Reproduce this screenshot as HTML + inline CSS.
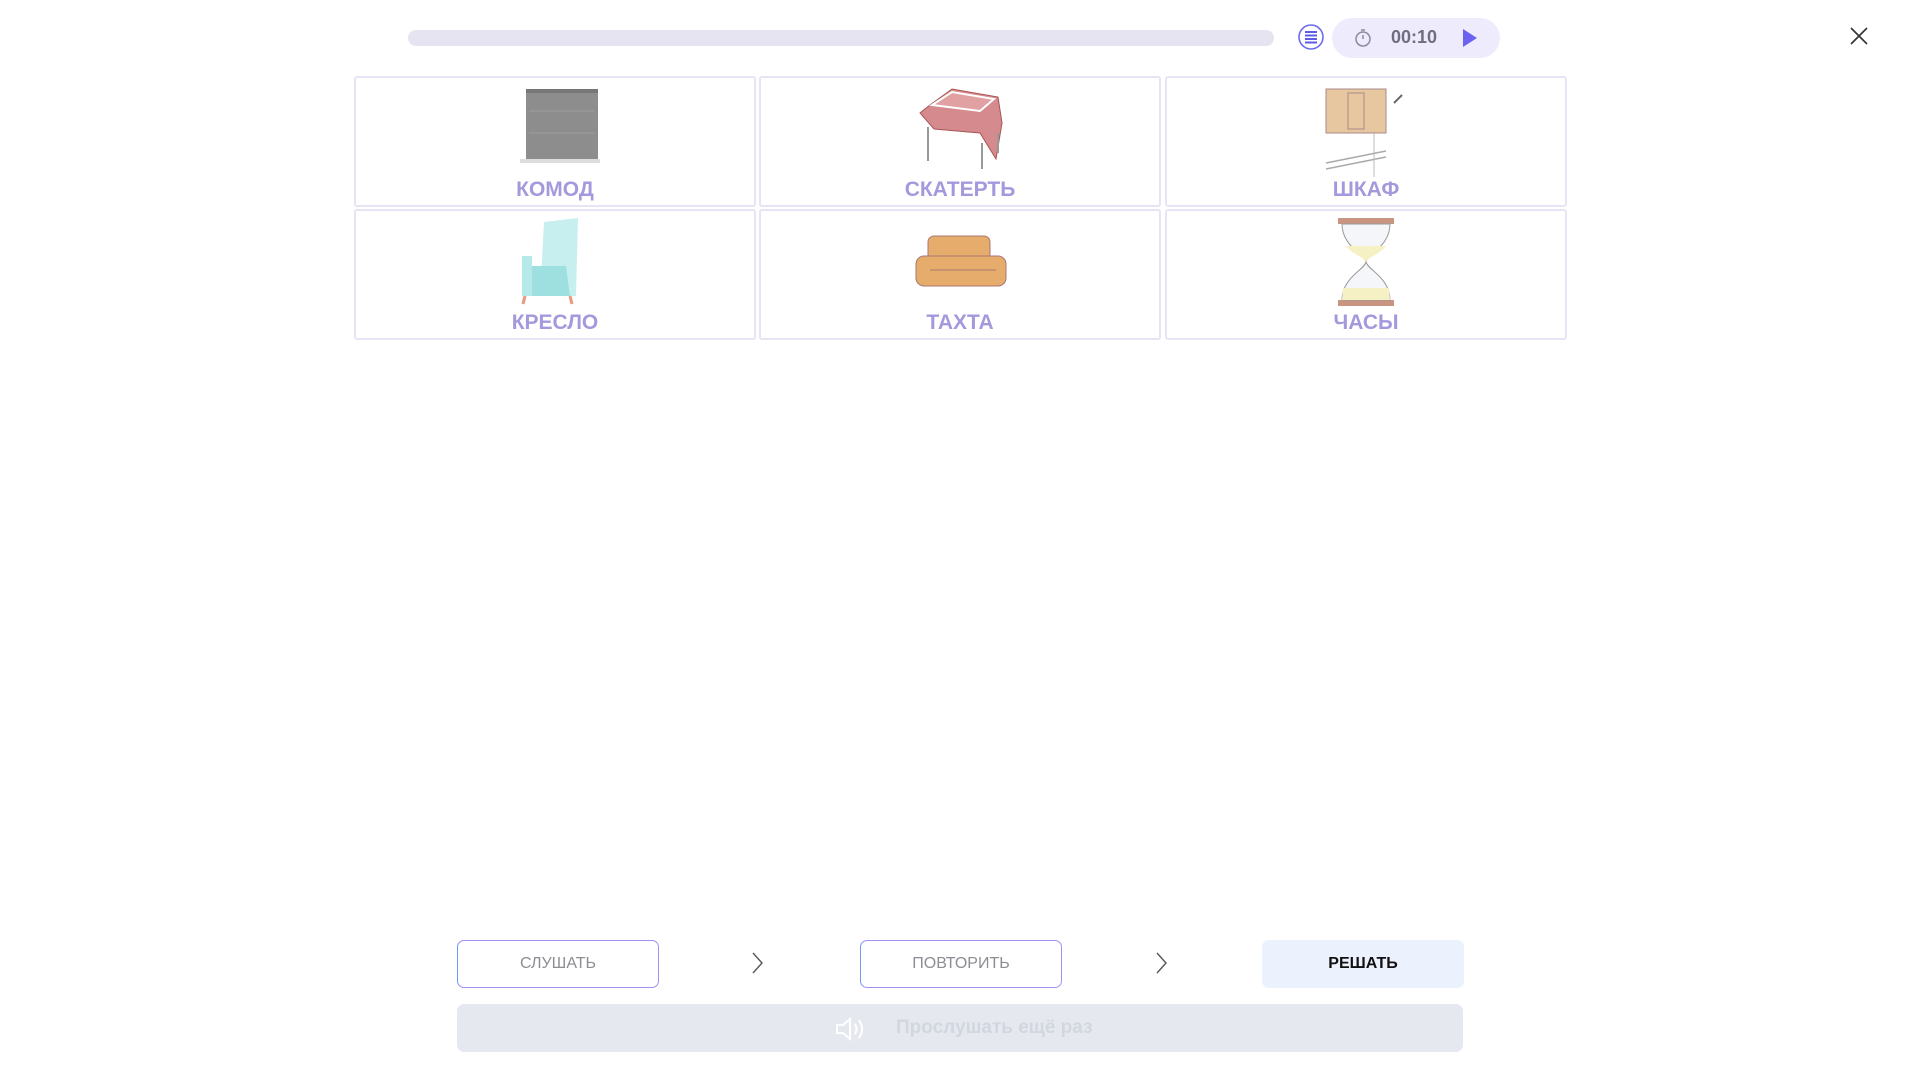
<!DOCTYPE html>
<html><head><meta charset="utf-8"><style>
*{margin:0;padding:0;box-sizing:border-box}
body{width:1920px;height:1080px;background:#fff;position:relative;overflow:hidden;font-family:"Liberation Sans",sans-serif}
.abs{position:absolute}
.bar{left:408px;top:30px;width:866px;height:16px;border-radius:8px;background:#e6e4f1}
.pill{left:1332px;top:18px;width:168px;height:40px;border-radius:20px;background:#eeebfd}
.card{position:absolute;width:402px;height:131px;border:2px solid #e6e4f5;border-radius:3px;background:#fff}
.card span{position:absolute;left:0;right:0;top:100px;text-align:center;font-weight:bold;font-size:21px;color:#a499dc}
.card svg{position:absolute;left:50%;top:5px;transform:translateX(-50%)}
.btn{position:absolute;top:940px;width:202px;height:48px;border-radius:7px;display:flex;align-items:center;justify-content:center;font-size:16px}
.g{border:1.5px solid #a48ff5;border-left-color:#6f9cf5;color:#8d8d94}
</style></head><body>
<div class="abs bar"></div>
<svg class="abs" style="left:1297px;top:23px" width="28" height="28" viewBox="0 0 28 28"><circle cx="14" cy="14" r="12" fill="#fff" stroke="#6b6af0" stroke-width="1.6"/><g stroke="#5c5ce8" stroke-width="2"><line x1="8" y1="9" x2="20" y2="9"/><line x1="8" y1="12.5" x2="20" y2="12.5"/><line x1="8" y1="16" x2="20" y2="16"/><line x1="8" y1="19.5" x2="20" y2="19.5"/></g></svg>
<div class="abs pill"></div>
<svg class="abs" style="left:1354px;top:28px" width="18" height="20" viewBox="0 0 18 20"><circle cx="9" cy="11" r="7" fill="none" stroke="#8a8aa0" stroke-width="1.5"/><line x1="9" y1="11" x2="9" y2="7" stroke="#8a8aa0" stroke-width="1.5"/><line x1="7" y1="2" x2="11" y2="2" stroke="#8a8aa0" stroke-width="1.5"/></svg>
<div class="abs" style="left:1391px;top:27px;font-size:18px;font-weight:bold;color:#6e6e80">00:10</div>
<svg class="abs" style="left:1462px;top:28px" width="16" height="20"><path d="M1 1 L15 10 L1 19Z" fill="#6b63f0"/></svg>
<svg class="abs" style="left:1850px;top:27px" width="18" height="18"><path d="M1 1L17 17M17 1L1 17" stroke="#333" stroke-width="1.6"/></svg>

<div class="card" style="left:354px;top:76px"><svg width="90" height="84" viewBox="0 0 90 84"><rect x="16" y="6" width="72" height="70" fill="#8d8d8d"/><rect x="16" y="6" width="72" height="4" fill="#777"/><g stroke="#a0a0a0" stroke-width="1"><line x1="19" y1="28" x2="85" y2="28"/><line x1="19" y1="50" x2="85" y2="50"/></g><rect x="10" y="76" width="84" height="4" fill="#ddd"/></svg><span>КОМОД</span></div>
<div class="card" style="left:759px;top:76px"><svg width="100" height="88" viewBox="0 0 100 88"><path d="M20 22 L42 6 L88 14 L92 40 L86 76 L70 50 L24 46 L10 30Z" fill="#d58a8d" stroke="#a55" stroke-width="1"/><path d="M22 22 L42 9 L84 16 L70 28Z" fill="#e1a1a3" stroke="#fff" stroke-width="2"/><g stroke="#999" stroke-width="2"><line x1="18" y1="44" x2="18" y2="78"/><line x1="72" y1="60" x2="72" y2="86"/><line x1="88" y1="50" x2="88" y2="70"/></g></svg><span>СКАТЕРТЬ</span></div>
<div class="card" style="left:1165px;top:76px"><svg width="100" height="96" viewBox="0 0 100 96"><rect x="10" y="6" width="60" height="44" fill="#e6c7a0" stroke="#a88" stroke-width="1"/><rect x="32" y="10" width="16" height="36" fill="none" stroke="#a88"/><path d="M86 12 L78 20" stroke="#666" stroke-width="2"/><path d="M10 80 L70 68 M10 86 L70 74" stroke="#aaa" stroke-width="1.5"/><line x1="58" y1="50" x2="58" y2="94" stroke="#bbb"/></svg><span>ШКАФ</span></div>
<div class="card" style="left:354px;top:209px"><svg width="90" height="90" viewBox="0 0 90 90"><path d="M34 6 L68 2 L66 80 L30 80 Z" fill="#c8efef"/><path d="M12 50 L56 50 L60 80 L14 80Z" fill="#9ee0e0"/><path d="M12 40 L22 40 L22 80 L12 80Z" fill="#b6eaea"/><g stroke="#e89a80" stroke-width="3"><line x1="15" y1="80" x2="13" y2="88"/><line x1="60" y1="80" x2="62" y2="88"/></g></svg><span>КРЕСЛО</span></div>
<div class="card" style="left:759px;top:209px"><svg width="100" height="80" viewBox="0 0 100 80"><rect x="18" y="20" width="62" height="30" rx="6" fill="#e6ac6b" stroke="#a77" /><rect x="6" y="40" width="90" height="30" rx="8" fill="#e6ac6b" stroke="#a77"/><line x1="20" y1="54" x2="86" y2="54" stroke="#a77"/></svg><span>ТАХТА</span></div>
<div class="card" style="left:1165px;top:209px"><svg width="60" height="92" viewBox="0 0 60 92"><rect x="2" y="2" width="56" height="6" fill="#c99580"/><rect x="2" y="84" width="56" height="6" fill="#c99580"/><path d="M6 8 C6 30 28 38 30 46 C28 54 6 62 6 84 L54 84 C54 62 32 54 30 46 C32 38 54 30 54 8Z" fill="#f4f6fa" stroke="#999"/><path d="M10 30 C16 38 26 40 30 46 C34 40 44 38 50 30Z" fill="#f6f1c4"/><path d="M7 72 L53 72 L54 84 L6 84Z" fill="#f6f1c4"/></svg><span>ЧАСЫ</span></div>

<div class="btn g" style="left:457px">СЛУШАТЬ</div>
<svg class="abs" style="left:752px;top:952px" width="12" height="22"><path d="M1 1 L10 11 L1 21" fill="none" stroke="#555" stroke-width="1.4"/></svg>
<div class="btn g" style="left:860px">ПОВТОРИТЬ</div>
<svg class="abs" style="left:1156px;top:952px" width="12" height="22"><path d="M1 1 L10 11 L1 21" fill="none" stroke="#555" stroke-width="1.4"/></svg>
<div class="btn" style="left:1262px;background:#ecf2fd;font-weight:bold;color:#111">РЕШАТЬ</div>
<div class="abs" style="left:457px;top:1004px;width:1006px;height:48px;border-radius:7px;background:#e5e9ef"></div>
<svg class="abs" style="left:835px;top:1016px" width="32" height="26" viewBox="0 0 32 26"><path d="M2 9 L8 9 L15 3 L15 23 L8 17 L2 17Z" fill="none" stroke="#fff" stroke-width="2"/><path d="M20 8 Q23 13 20 18 M24 4 Q30 13 24 22" fill="none" stroke="#fff" stroke-width="2"/></svg>
<div class="abs" style="left:896px;top:1017px;font-size:19px;font-weight:bold;color:#d2d6de">Прослушать ещё раз</div>
</body></html>
